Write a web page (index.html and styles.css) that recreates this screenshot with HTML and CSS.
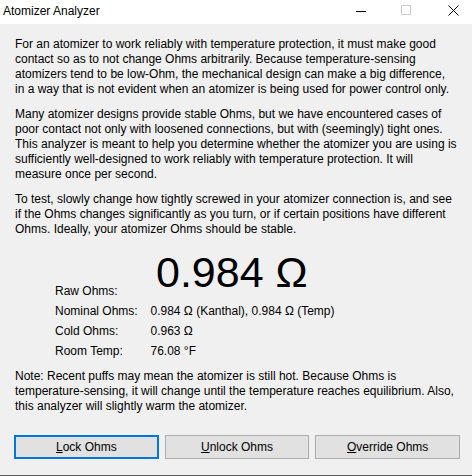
FILE: index.html
```html
<!DOCTYPE html>
<html lang="en">
<head>
<meta charset="utf-8">
<title>Atomizer Analyzer</title>
<link rel="stylesheet" href="styles.css">
</head>
<body>
<div class="window">
  <header class="titlebar">
    <span class="title">Atomizer Analyzer</span>
    <div class="controls">
      <svg class="ctl ctl-min" width="10" height="10" viewBox="0 0 10 10"><path d="M0 5.5H10" stroke="#000" stroke-width="1"/></svg>
      <svg class="ctl ctl-max" width="10" height="10" viewBox="0 0 10 10"><rect x="0.5" y="0.5" width="9" height="9" fill="none" stroke="#cccccc" stroke-width="1"/></svg>
      <svg class="ctl ctl-close" width="11" height="11" viewBox="0 0 11 11"><path d="M0.5 0.5L10.5 10.5M10.5 0.5L0.5 10.5" stroke="#000" stroke-width="1"/></svg>
    </div>
  </header>
  <main class="content">
    <p class="intro">For an atomizer to work reliably with temperature protection, it must make good<br>contact so as to not change Ohms arbitrarily. Because temperature-sensing<br>atomizers tend to be low-Ohm, the mechanical design can make a big difference,<br>in a way that is not evident when an atomizer is being used for power control only.</p>
    <p>Many atomizer designs provide stable Ohms, but we have encountered cases of<br>poor contact not only with loosened connections, but with (seemingly) tight ones.<br>This analyzer is meant to help you determine whether the atomizer you are using is<br>sufficiently well-designed to work reliably with temperature protection. It will<br>measure once per second.</p>
    <p>To test, slowly change how tightly screwed in your atomizer connection is, and see<br>if the Ohms changes significantly as you turn, or if certain positions have different<br>Ohms. Ideally, your atomizer Ohms should be stable.</p>
    <div class="stats">
      <span class="label label-raw">Raw Ohms:</span><span class="big">0.984 Ω</span>
      <span class="label">Nominal Ohms:</span><span class="value">0.984 Ω (Kanthal), 0.984 Ω (Temp)</span>
      <span class="label">Cold Ohms:</span><span class="value">0.963 Ω</span>
      <span class="label">Room Temp:</span><span class="value">76.08 °F</span>
    </div>
    <p class="note">Note: Recent puffs may mean the atomizer is still hot. Because Ohms is<br>temperature-sensing, it will change until the temperature reaches equilibrium. Also,<br>this analyzer will slightly warm the atomizer.</p>
    <div class="buttons">
      <button class="btn btn-focused"><u>L</u>ock Ohms</button>
      <button class="btn"><u>U</u>nlock Ohms</button>
      <button class="btn"><u>O</u>verride Ohms</button>
    </div>
  </main>
</div>
</body>
</html>
```
FILE: styles.css
```css
html, body {
  margin: 0;
  padding: 0;
}

body {
  width: 472px;
  height: 476px;
  overflow: hidden;
  font-family: "Liberation Sans", Arial, sans-serif;
  font-size: 12px;
  color: #000;
  background: #f0f0f0;
}

.window {
  box-sizing: border-box;
  height: 476px;
  display: flex;
  flex-direction: column;
  background: #f0f0f0;
  border-bottom: 1px solid #5a5a5a;
}

.titlebar {
  height: 24px;
  flex: none;
  background: #ffffff;
  display: flex;
  align-items: flex-start;
  padding-left: 3px;
}

.title {
  line-height: 22px;
}

.controls {
  margin-left: auto;
  display: flex;
  align-items: flex-start;
}

.ctl {
  display: block;
}

.ctl-min {
  margin-top: 6px;
}

.ctl-max {
  margin-top: 5px;
  margin-left: 35px;
}

.ctl-close {
  margin-top: 5px;
  margin-left: 37px;
  margin-right: 13px;
}

.content {
  flex: 1;
  display: flex;
  flex-direction: column;
  padding: 13px 12px 16px 15px;
}

p {
  margin: 0;
  line-height: 15px;
  white-space: nowrap;
}

p + p {
  margin-top: 10px;
}

.stats {
  margin-top: 14px;
  padding-left: 40px;
  display: grid;
  grid-template-columns: 95.5px 1fr;
  line-height: 20px;
}

.label-raw {
  align-self: end;
}

.big {
  align-self: end;
  font-size: 43px;
  line-height: 43px;
  margin-left: 5.5px;
  margin-bottom: 6.5px;
}

.note {
  margin-top: 8px;
}

.buttons {
  margin-top: auto;
  margin-left: -1px;
  display: grid;
  grid-template-columns: repeat(3, 1fr);
  gap: 6px;
}

.btn {
  box-sizing: border-box;
  height: 24px;
  padding: 0;
  margin: 0;
  font-family: inherit;
  font-size: 12px;
  color: #000;
  background: #e1e1e1;
  border: 1px solid #adadad;
  border-radius: 0;
}

.btn-focused {
  border: 2px solid #0078d7;
}
```
